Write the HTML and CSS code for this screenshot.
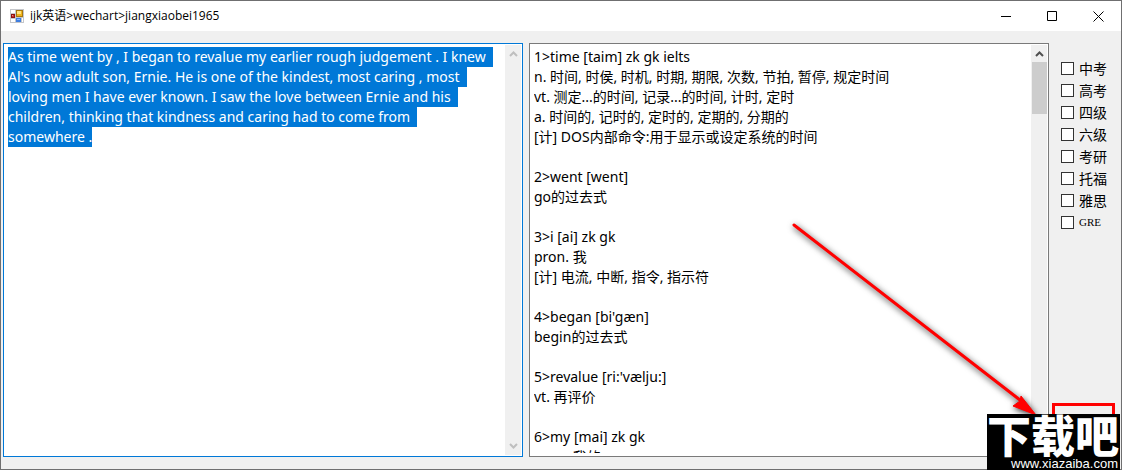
FILE: index.html
```
<!doctype html>
<html lang="zh-CN">
  <head>
    <meta charset="UTF-8" />
    <meta name="viewport" content="width=device-width, initial-scale=1.0" />
    <title>ijk英语</title>
    <link rel="stylesheet" href="styles.css">
  </head>
  <body>
    <div class="window">
      <div class="titlebar">
        <svg class="logo" width="14" height="14" viewBox="0 0 14 14">
          <rect x="0" y="0" width="14" height="14" fill="#c4c6ca" />
          <rect x="1" y="1" width="4" height="3" fill="#fff" />
          <rect x="1" y="10" width="4" height="3" fill="#fff" />
          <rect x="12" y="9" width="1" height="4" fill="#fff" />
          <rect x="6.500" y="1.500" width="6" height="6" fill="#f0b41c" stroke="#a8770c" />
          <rect x="7" y="2" width="4" height="3" fill="#ffe27a" />
          <rect x="1.500" y="5.500" width="3" height="3" fill="#c8302c" stroke="#8d1010" />
          <rect x="2" y="6" width="1" height="1" fill="#f09080" />
          <rect x="6" y="9" width="5" height="4" fill="#3d7de0" />
          <rect x="7" y="10" width="3" height="1" fill="#8bb8ff" />
        </svg>
        <span class="name">ijk英语&gt;wechart&gt;jiangxiaobei1965</span>
        <button type="button" class="ctrl" aria-label="最小化">
          <svg width="11" height="11" viewBox="0 0 11 11"><path d="M0 5.500H10" /></svg>
        </button>
        <button type="button" class="ctrl" aria-label="最大化">
          <svg width="11" height="11" viewBox="0 0 11 11"><path d="M.5 .5H9.500V9.500H.5Z" /></svg>
        </button>
        <button type="button" class="ctrl" aria-label="关闭">
          <svg width="11" height="11" viewBox="0 0 11 11"><path d="M.5 .5L10.500 10.500M10.500 .5L.5 10.500" /></svg>
        </button>
      </div>

      <div class="main">
        <div class="box active">
          <textarea class="text yuanwen" aria-label="原文" spellcheck="false">As time went by , I began to revalue my earlier rough judgement . I knew 
Al's now adult son, Ernie. He is one of the kindest, most caring , most 
loving men I have ever known. I saw the love between Ernie and his 
children, thinking that kindness and caring had to come from 
somewhere .</textarea>
          <div class="scroll off">
            <svg width="9" height="6" viewBox="0 0 9 6"><path d="M1 5L4.500 1.500L8 5" /></svg>
            <svg width="9" height="6" viewBox="0 0 9 6"><path d="M1 1L4.500 4.500L8 1" /></svg>
          </div>
        </div>

        <div class="box">
          <textarea class="text jieshi" aria-label="解释" spellcheck="false">1&gt;time [taim] zk gk ielts
n. 时间, 时侯, 时机, 时期, 期限, 次数, 节拍, 暂停, 规定时间
vt. 测定...的时间, 记录...的时间, 计时, 定时
a. 时间的, 记时的, 定时的, 定期的, 分期的
[计] DOS内部命令:用于显示或设定系统的时间

2&gt;went [went]
go的过去式

3&gt;i [ai] zk gk
pron. 我
[计] 电流, 中断, 指令, 指示符

4&gt;began [bi'gæn]
begin的过去式

5&gt;revalue [ri:'vælju:]
vt. 再评价

6&gt;my [mai] zk gk
pron. 我的</textarea>
          <div class="scroll">
            <svg width="9" height="6" viewBox="0 0 9 6"><path d="M1 5L4.500 1.500L8 5" /></svg>
            <div class="thumb"></div>
          </div>
        </div>

        <div class="side">
          <label><input type="checkbox" />中考</label>
          <label><input type="checkbox" />高考</label>
          <label><input type="checkbox" />四级</label>
          <label><input type="checkbox" />六级</label>
          <label><input type="checkbox" />考研</label>
          <label><input type="checkbox" />托福</label>
          <label><input type="checkbox" />雅思</label>
          <label class="en"><input type="checkbox" />GRE</label>
        </div>
      </div>
    </div>

    <!-- 标注和水印 -->
    <div class="frame"></div>
    <svg class="arrow" width="260" height="210" viewBox="0 0 260 210">
      <g fill="#ff0000">
        <path d="M12 13L238 188" stroke="#ff0000" stroke-width="3" stroke-linecap="round" />
        <path d="M254 203L239 184L238 189L231 194Z" stroke="#ff0000" stroke-width="1" />
      </g>
    </svg>
    <div class="mark">
      <div class="big">下载吧</div>
      <div class="url">www.xiazaiba.com</div>
    </div>

    <script>
      let yuanwen = document.querySelector('.yuanwen')
      // 打开时选中全部原文
      yuanwen.focus()
      yuanwen.select()
    </script>
  </body>
</html>
```

FILE: styles.css
```
* {
  box-sizing: border-box;
  padding: 0;
  margin: 0;
}
body {
  position: relative;
  min-height: 100vh;
  display: flex;
  overflow: hidden;
  font-family: "Open Sans", "Noto Sans CJK SC", sans-serif;
  font-size: 14px;
  color: #000;
}
.window {
  flex: 1;
  display: flex;
  flex-direction: column;
  border: 1px solid #6f6f70;
  background-color: #f0f0f0;
}
.titlebar {
  display: flex;
  align-items: center;
  height: 30px;
  padding-left: 9px;
  background-color: #fff;
}
.name {
  flex: 1;
  margin-left: 6px;
  font-size: 12px;
  line-height: 20px;
}
.ctrl {
  width: 46px;
  height: 30px;
  display: flex;
  align-items: center;
  justify-content: center;
  border: 0;
  background-color: #fff;
}
.ctrl svg {
  fill: none;
  stroke: #000;
}
.main {
  flex: 1;
  display: flex;
  gap: 6px;
  padding: 12px 0 12px 2px;
}
.box {
  flex: 1;
  display: flex;
  border: 1px solid #7a7a7a;
  background-color: #fff;
}
.active {
  border-color: #0078d7;
}
.text {
  flex: 1;
  min-width: 0;
  margin: 3px 0 3px 4px;
  border: 0;
  outline: 0;
  resize: none;
  overflow: hidden;
  background-color: #fff;
  color: #000;
  font-family: "Noto Sans", "Noto Sans CJK SC", sans-serif;
  font-size: 14px;
  line-height: 20px;
  white-space: pre;
}
.text::selection {
  background-color: #0078d7;
  color: #fff;
}
.scroll {
  width: 16px;
  margin: 1px;
  padding: 6px 0;
  display: flex;
  flex-direction: column;
  align-items: center;
  background-color: #f0f0f0;
}
.scroll svg {
  fill: none;
  stroke: #505050;
  stroke-width: 2;
}
.off {
  justify-content: space-between;
}
.off svg {
  stroke: #bfbfbf;
}
.thumb {
  width: 15px;
  height: 52px;
  margin-top: 5px;
  background-color: #cdcdcd;
}
.side {
  width: 66px;
  padding: 14px 0 0 6px;
  display: flex;
  flex-direction: column;
}
.side label {
  display: flex;
  align-items: center;
  height: 22px;
  gap: 5px;
}
.side .en {
  font-family: "Liberation Serif", serif;
  font-size: 11px;
}
.side input {
  appearance: none;
  width: 13px;
  height: 13px;
  border: 1px solid #333;
  background-color: #fff;
}
.frame {
  position: absolute;
  right: 7px;
  bottom: 37px;
  width: 63px;
  height: 30px;
  border: 3px solid #ff0000;
}
.arrow {
  position: absolute;
  right: 80px;
  bottom: 48px;
  filter: drop-shadow(1px 2px 3px #333);
}
.mark {
  position: absolute;
  right: 2px;
  bottom: 0;
  width: 133px;
  height: 56px;
  background-color: #000;
  color: #fff;
}
.big {
  font-family: "Noto Sans CJK SC", sans-serif;
  font-size: 44px;
  font-weight: 900;
  line-height: 40px;
}
.url {
  padding-right: 2px;
  font-family: "Liberation Sans", sans-serif;
  font-size: 13px;
  line-height: 20px;
  text-align: right;
}
```
